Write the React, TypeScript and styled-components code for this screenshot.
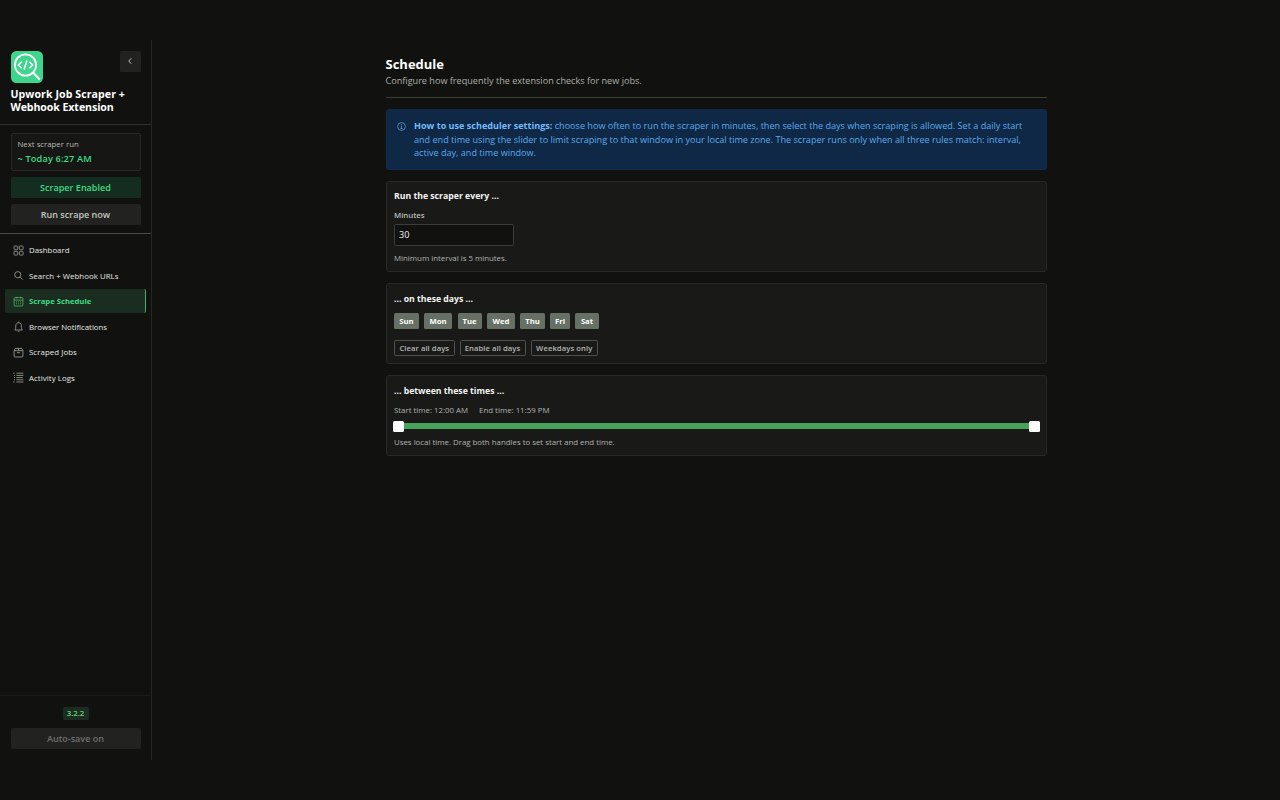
import React from "react";
import styled, { createGlobalStyle } from "styled-components";

const GlobalStyle = createGlobalStyle`
  * { box-sizing: border-box; }
  body {
    margin: 0;
    background: #11120f;
    color: #eef0ec;
    font-family: "Open Sans", "Noto Sans", sans-serif;
    overflow: hidden;
  }
  button, input { font: inherit; color: inherit; margin: 0; }
`;

const T = styled.span<{ $track?: number }>`
  letter-spacing: ${(p) => p.$track ?? 0}px;
  white-space: nowrap;
`;

const Shell = styled.div`
  display: flex;
  height: 800px;
  padding: 40px 0;
`;

const Sidebar = styled.aside`
  display: flex;
  flex-direction: column;
  width: 152px;
  height: 720px;
  border-right: 1px solid #262725;
`;

const Brand = styled.header`
  height: 85px;
  padding: 10.5px 10.5px 0;
  border-bottom: 1px solid #30312f;
`;

const BrandRow = styled.div`
  display: flex;
  justify-content: space-between;
  align-items: flex-start;
`;

const CollapseButton = styled.button`
  display: flex;
  align-items: center;
  justify-content: center;
  width: 21px;
  height: 21px;
  padding: 0;
  border: 0;
  border-radius: 1.5px;
  background: #222321;
`;

const BrandName = styled.h1`
  display: flex;
  flex-direction: column;
  margin: 5px 0 0;
  font-size: 10.6px;
  font-weight: 700;
  line-height: 13px;
  color: #fff;
`;

const RunPanel = styled.section`
  display: flex;
  flex-direction: column;
  height: 109px;
  padding: 8px 10.5px 0;
  border-bottom: 1px solid #4a4b49;
`;

const NextRun = styled.div`
  height: 38px;
  margin-bottom: 6px;
  padding: 3px 6px 0;
  border: 1px solid #292a28;
  border-radius: 2px;
  background: #161715;
`;

const NextRunLabel = styled.div`
  font-size: 7.8px;
  line-height: 14px;
  color: #b9bcb6;
`;

const NextRunTime = styled.div`
  font-size: 9.2px;
  font-weight: 600;
  line-height: 15px;
  color: #3ddc84;
`;

const WideButton = styled.button<{ $tone: "green" | "plain" | "muted" }>`
  display: flex;
  align-items: center;
  justify-content: center;
  width: 130px;
  height: 21px;
  margin-bottom: 6px;
  padding: 0;
  border: 0;
  border-radius: 1.5px;
  font-size: 9.05px;
  font-weight: 600;
  background: ${(p) => (p.$tone === "green" ? "#142d20" : "#222321")};
  color: ${(p) => ({ green: "#3ddc84", plain: "#c3c6c0", muted: "#6e706c" })[p.$tone]};
`;

const Nav = styled.nav`
  display: flex;
  flex-direction: column;
  gap: 1.5px;
  padding: 4px 5px 0;
`;

const NavItem = styled.a<{ $active?: boolean }>`
  display: flex;
  align-items: center;
  gap: 5px;
  height: 24px;
  padding-left: 8px;
  border-radius: 2px;
  border-right: 1px solid ${(p) => (p.$active ? "#4caf61" : "transparent")};
  background: ${(p) => (p.$active ? "#1b2d20" : "transparent")};
  color: ${(p) => (p.$active ? "#3ddc84" : "#e6e8e4")};
  font-size: ${(p) => (p.$active ? 7.7 : 7.85)}px;
  font-weight: ${(p) => (p.$active ? 700 : 500)};
`;

const NavGlyph = styled.svg<{ $active?: boolean }>`
  flex: none;
  width: 11px;
  height: 11px;
  fill: none;
  stroke: ${(p) => (p.$active ? "#4fb865" : "#a3a6a1")};
  stroke-width: 0.8;
`;

const SidebarFooter = styled.footer`
  display: flex;
  flex-direction: column;
  align-items: center;
  gap: 8px;
  height: 65px;
  margin-top: auto;
  padding-top: 11px;
  border-top: 1px solid #1b1c1a;
`;

const Version = styled.span`
  width: 26px;
  height: 13px;
  border-radius: 1.5px;
  background: #1b2d20;
  color: #6fcf80;
  font-size: 7.8px;
  font-weight: 600;
  line-height: 13px;
  text-align: center;
`;

const Main = styled.main`
  display: flex;
  flex-direction: column;
  width: 661px;
  margin-left: 234px;
`;

const PageHeader = styled.header`
  height: 58px;
  padding-top: 16px;
  margin-bottom: 11px;
  border-bottom: 1px solid #3c3d3a;
`;

const PageTitle = styled.h2`
  margin: 0 0 0 -0.5px;
  font-size: 13px;
  font-weight: 700;
  line-height: 16px;
  color: #fff;
`;

const PageSubtitle = styled.p`
  margin: 1px 0 0 -0.5px;
  font-size: 9.1px;
  line-height: 15px;
  color: #adb0a9;
`;

const Notice = styled.section`
  display: flex;
  gap: 8px;
  height: 61px;
  margin-bottom: 11px;
  padding: 11px 11px 0;
  border: 1px solid #0f2c4a;
  border-radius: 3px;
  background: #0e2845;
  color: #5ea9ec;
`;

const NoticeIcon = styled.svg`
  flex: none;
  width: 9px;
  height: 9px;
  margin-top: 0.5px;
  margin-left: -1px;
`;

const NoticeText = styled.div`
  display: flex;
  flex-direction: column;
  font-size: 9.08px;
  line-height: 13.3px;
  margin-top: -1.8px;
  b { color: #74bbfb; }
`;

const Card = styled.section<{ $h: number; $pad: number }>`
  display: flex;
  flex-direction: column;
  height: ${(p) => p.$h}px;
  margin-bottom: 11px;
  padding: ${(p) => p.$pad}px 7px 0;
  border: 1px solid #282927;
  border-radius: 3px;
  background: #191a18;
`;

const CardTitle = styled.h3`
  margin: 0;
  font-size: 8.7px;
  font-weight: 700;
  line-height: 13px;
  color: #f3f4f2;
`;

const FieldLabel = styled.label`
  margin-top: 7px;
  font-size: 7.8px;
  font-weight: 600;
  line-height: 11px;
  color: #b9bcb6;
`;

const NumberField = styled.input`
  width: 120px;
  height: 22px;
  margin-top: 3px;
  padding: 0 4px 2px;
  border: 1px solid #3c3d3a;
  border-radius: 1.5px;
  outline: 0;
  background: #11120f;
  color: #f0f1ef;
  font-size: 9.1px;
`;

const Hint = styled.p<{ $top: number }>`
  margin: ${(p) => p.$top}px 0 0;
  font-size: 7.85px;
  line-height: 11px;
  color: #b0b3ad;
`;

const ButtonRow = styled.div<{ $top: number }>`
  display: flex;
  gap: 5px;
  margin-top: ${(p) => p.$top}px;
`;

const Chip = styled.button<{ $w: number; $after: number; $outline?: boolean }>`
  display: flex;
  align-items: center;
  justify-content: center;
  width: ${(p) => p.$w}px;
  height: 16px;
  margin-right: ${(p) => p.$after}px;
  padding: 0 0 1px;
  border: ${(p) => (p.$outline ? "1px solid #50524e" : "0")};
  border-radius: 1.5px;
  background: ${(p) => (p.$outline ? "transparent" : "#667064")};
  color: ${(p) => (p.$outline ? "#b4b7b1" : "#fff")};
  font-size: 7.7px;
  font-weight: ${(p) => (p.$outline ? 600 : 700)};
`;

const TimeRow = styled.div`
  display: flex;
  gap: 11px;
  margin-top: 7px;
  font-size: 7.85px;
  line-height: 11px;
  color: #b0b3ad;
`;

const Slider = styled.div`
  display: flex;
  align-items: center;
  height: 12px;
  margin: 4px -1px 0 -1px;
`;

const Thumb = styled.div`
  width: 11px;
  height: 11px;
  border-radius: 1.5px;
  background: #fff;
`;

const Track = styled.div`
  flex: 1;
  height: 6px;
  background: #48a259;
`;

const icons: Record<string, React.ReactNode> = {
  dashboard: (
    <>
      <rect x="1" y="1" width="3.7" height="3.7" rx="0.8" />
      <rect x="6.4" y="1" width="3.7" height="3.7" rx="0.8" />
      <rect x="1" y="6.4" width="3.7" height="3.7" rx="0.8" />
      <rect x="6.4" y="6.4" width="3.7" height="3.7" rx="0.8" />
    </>
  ),
  search: (
    <>
      <circle cx="4.8" cy="4.7" r="3.1" />
      <path d="M7.1 7l2.6 2.6" />
    </>
  ),
  calendar: (
    <>
      <rect x="1.1" y="1.6" width="8.8" height="8.4" rx="0.9" />
      <path d="M1.1 4.1h8.8M3.3 0.8v1.6M7.7 0.8v1.6" />
      <path d="M3 5.9h5M3 7.8h5" strokeDasharray="1 1" />
    </>
  ),
  bell: (
    <>
      <path d="M1.8 9h7.6c-.8-.9-1-1.8-1-4.2 0-1.8-1-3-2.8-3s-2.8 1.2-2.8 3c0 2.4-.2 3.3-1 4.2z" />
      <path d="M5.6 0.6v1.2M4.7 10.2h1.8" />
    </>
  ),
  box: (
    <path d="M1.1 3.7l1.2-2.3h6.4l1.2 2.3v5.4a.9.9 0 0 1-.9.9H2a.9.9 0 0 1-.9-.9zM1.1 3.7h8.8M5.5 1.4v2.3M4 5.7h3" />
  ),
  list: (
    <path d="M0.2 1.2h1.4M3.4 1.2h7M1 3.4h1M3.4 3.4h7M1 5.6h1M3.4 5.6h6.4M1 7.8h1M3.4 7.8h7M0.2 10h1.4M3.4 10h7" />
  ),
};

const navItems = [
  { icon: "dashboard", label: "Dashboard", track: 0 },
  { icon: "search", label: "Search + Webhook URLs", track: 0.04 },
  { icon: "calendar", label: "Scrape Schedule", track: 0, active: true },
  { icon: "bell", label: "Browser Notifications", track: -0.03 },
  { icon: "box", label: "Scraped Jobs", track: 0.07 },
  { icon: "list", label: "Activity Logs", track: 0.07 },
];

const days = [
  { label: "Sun", w: 25, after: 0 },
  { label: "Mon", w: 28, after: 0.5 },
  { label: "Tue", w: 24, after: 0.5 },
  { label: "Wed", w: 28, after: 0 },
  { label: "Thu", w: 25, after: 0 },
  { label: "Fri", w: 20, after: 0 },
  { label: "Sat", w: 24, after: 0 },
];

const presets = [
  { label: "Clear all days", w: 60.5, track: 0.04 },
  { label: "Enable all days", w: 66, track: 0.04 },
  { label: "Weekdays only", w: 67.5, track: 0.07 },
];

const Logo = () => (
  <svg width="32" height="32" viewBox="0 0 32 32" fill="none" stroke="#fff">
    <rect width="32" height="32" rx="5.5" fill="#3dd68c" stroke="none" />
    <circle cx="14.5" cy="14" r="10.6" strokeWidth="1.8" />
    <path d="M22.2 21.7l6.6 6.8" strokeWidth="2.2" />
    <path d="M10.7 10.7L7.3 14l3.4 3.3M18.3 10.7l3.4 3.3-3.4 3.3M15.9 9.5l-2.8 9" strokeWidth="1.6" />
  </svg>
);

export default function App() {
  return (
    <>
      <GlobalStyle />
      <Shell>
        <Sidebar>
          <Brand>
            <BrandRow>
              <Logo />
              <CollapseButton aria-label="Collapse sidebar">
                <svg width="6" height="8" viewBox="0 0 6 8" fill="none" stroke="#d4d6d2">
                  <path d="M4.2 1.3L1.8 4l2.4 2.7" strokeWidth="0.9" />
                </svg>
              </CollapseButton>
            </BrandRow>
            <BrandName>
              <T $track={0.07}>Upwork Job Scraper +</T>
              <T $track={-0.08}>Webhook Extension</T>
            </BrandName>
          </Brand>
          <RunPanel>
            <NextRun>
              <NextRunLabel><T>Next scraper run</T></NextRunLabel>
              <NextRunTime><T $track={0.15}>~ Today 6:27 AM</T></NextRunTime>
            </NextRun>
            <WideButton $tone="green"><T>Scraper Enabled</T></WideButton>
            <WideButton $tone="plain"><T>Run scrape now</T></WideButton>
          </RunPanel>
          <Nav>
            {navItems.map((n) => (
              <NavItem key={n.label} $active={n.active}>
                <NavGlyph viewBox="0 0 11 11" $active={n.active}>{icons[n.icon]}</NavGlyph>
                <T $track={n.track}>{n.label}</T>
              </NavItem>
            ))}
          </Nav>
          <SidebarFooter>
            <Version><T>3.2.2</T></Version>
            <WideButton $tone="muted"><T>Auto-save on</T></WideButton>
          </SidebarFooter>
        </Sidebar>
        <Main>
          <PageHeader>
            <PageTitle><T>Schedule</T></PageTitle>
            <PageSubtitle><T>Configure how frequently the extension checks for new jobs.</T></PageSubtitle>
          </PageHeader>
          <Notice>
            <NoticeIcon viewBox="0 0 9 9" fill="none" stroke="#5ea9ec" strokeWidth="0.7">
              <circle cx="4.5" cy="4.5" r="3.9" />
              <path d="M3.7 4h.9v2.6M3.5 6.6h2.1M4.4 2v.9" />
            </NoticeIcon>
            <NoticeText>
              <T><b>How to use scheduler settings:</b> choose how often to run the scraper in minutes, then select the days when scraping is allowed. Set a daily start</T>
              <T>and end time using the slider to limit scraping to that window in your local time zone. The scraper runs only when all three rules match: interval,</T>
              <T>active day, and time window.</T>
            </NoticeText>
          </Notice>
          <Card $h={91} $pad={8}>
            <CardTitle><T>Run the scraper every ...</T></CardTitle>
            <FieldLabel><T>Minutes</T></FieldLabel>
            <NumberField defaultValue="30" />
            <Hint $top={7}><T>Minimum interval is 5 minutes.</T></Hint>
          </Card>
          <Card $h={81} $pad={9}>
            <CardTitle><T>... on these days ...</T></CardTitle>
            <ButtonRow $top={7}>
              {days.map((d) => (
                <Chip key={d.label} $w={d.w} $after={d.after}><T>{d.label}</T></Chip>
              ))}
            </ButtonRow>
            <ButtonRow $top={11}>
              {presets.map((p) => (
                <Chip key={p.label} $w={p.w} $after={0} $outline><T $track={p.track}>{p.label}</T></Chip>
              ))}
            </ButtonRow>
          </Card>
          <Card $h={81} $pad={9}>
            <CardTitle><T>... between these times ...</T></CardTitle>
            <TimeRow>
              <T>Start time: 12:00 AM</T>
              <T>End time: 11:59 PM</T>
            </TimeRow>
            <Slider>
              <Thumb />
              <Track />
              <Thumb />
            </Slider>
            <Hint $top={5}><T>Uses local time. Drag both handles to set start and end time.</T></Hint>
          </Card>
        </Main>
      </Shell>
    </>
  );
}
